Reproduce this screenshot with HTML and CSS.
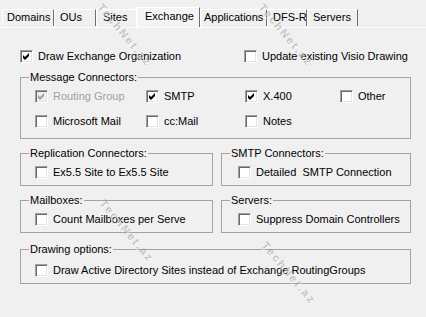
FILE: index.html
```html
<!DOCTYPE html>
<html>
<head>
<meta charset="utf-8">
<link rel="stylesheet" href="styles.css">
</head>
<body>
<div class="tabs">
  <div class="tab t-domains">Domains</div>
  <div class="tab t-ous">OUs</div>
  <div class="tab t-sites">Sites</div>
  <div class="tab t-exchange active">Exchange</div>
  <div class="tab t-apps">Applications</div>
  <div class="tab t-dfsr">DFS-R</div>
  <div class="tab t-servers">Servers</div>
</div>
<div class="page">
  <div class="toprow">
    <label class="cb"><span class="box"><svg viewBox="0 0 11 11"><polygon points="2,4 4,6 8,2 8,5 4,9 2,7"/></svg></span>Draw Exchange Organization</label>
    <label class="cb"><span class="box"></span>Update existing Visio Drawing</label>
  </div>

  <fieldset class="group msg">
    <legend>Message Connectors:</legend>
    <div class="grid4">
      <label class="cb disabled"><span class="box"><svg viewBox="0 0 11 11"><polygon points="2,4 4,6 8,2 8,5 4,9 2,7"/></svg></span>Routing Group</label>
      <label class="cb"><span class="box"><svg viewBox="0 0 11 11"><polygon points="2,4 4,6 8,2 8,5 4,9 2,7"/></svg></span>SMTP</label>
      <label class="cb"><span class="box"><svg viewBox="0 0 11 11"><polygon points="2,4 4,6 8,2 8,5 4,9 2,7"/></svg></span>X.400</label>
      <label class="cb"><span class="box"></span>Other</label>
      <label class="cb"><span class="box"></span>Microsoft Mail</label>
      <label class="cb"><span class="box"></span>cc:Mail</label>
      <label class="cb"><span class="box"></span>Notes</label>
    </div>
  </fieldset>

  <div class="pair">
    <fieldset class="group">
      <legend>Replication Connectors:</legend>
      <div class="inner left"><label class="cb"><span class="box"></span>Ex5.5 Site to Ex5.5 Site</label></div>
    </fieldset>
    <fieldset class="group">
      <legend>SMTP Connectors:</legend>
      <div class="inner right"><label class="cb"><span class="box"></span>Detailed&nbsp; SMTP Connection</label></div>
    </fieldset>
  </div>

  <div class="pair">
    <fieldset class="group">
      <legend>Mailboxes:</legend>
      <div class="inner left"><label class="cb"><span class="box"></span>Count Mailboxes per Serve</label></div>
    </fieldset>
    <fieldset class="group">
      <legend>Servers:</legend>
      <div class="inner right"><label class="cb"><span class="box"></span>Suppress Domain Controllers</label></div>
    </fieldset>
  </div>

  <fieldset class="group drawing">
    <legend>Drawing options:</legend>
    <div class="inner left tall"><label class="cb"><span class="box"></span>Draw Active Directory Sites instead of Exchange RoutingGroups</label></div>
  </fieldset>
</div>

<div class="wm wm1">TechNet.az</div>
<div class="wm wm2">TechNet.az</div>
<div class="wm wm3">TechNet.az</div>
<div class="wm wm4">TechNet.az</div>
</body>
</html>
```
FILE: styles.css
```css
* { box-sizing: border-box; }
html, body { margin: 0; background: #f0f0f0; }
body {
  font: 11px/13px "Liberation Sans", Arial, sans-serif;
  color: #000;
  width: 426px;
  height: 317px;
  overflow: hidden;
  position: relative;
}

/* tabs */
.tabs {
  display: flex;
  align-items: flex-end;
  height: 27px;
  padding-left: 2px;
}
.tab {
  height: 17px;
  margin-bottom: 1px;
  padding-top: 1px;
  border-left: 1px solid #fff;
  border-top: 1px solid #fff;
  border-right: 1px solid #6e6e6e;
  white-space: nowrap;
}
.t-domains { width: 52px; padding-left: 4px; }
.t-ous { width: 42px; padding-left: 5px; }
.t-sites { width: 40px; padding-left: 6px; border-right-color: transparent; }
.t-exchange { width: 64px; padding-left: 8px; }
.t-apps { width: 67px; padding-left: 3px; }
.t-dfsr { width: 40px; padding-left: 5px; }
.t-servers { width: 51px; padding-left: 5px; }
.tab.active {
  height: 20px;
  margin-bottom: 0;
  padding-top: 2px;
  background: #f4f4f4;
  position: relative;
  z-index: 1;
}

/* page */
.page {
  border-top: 1px solid #fbfbfb;
  padding: 0 15px 0 20px;
}
.toprow {
  margin-top: 22px;
  display: grid;
  grid-template-columns: 224px auto;
}

.cb {
  display: flex;
  align-items: center;
  gap: 5px;
  height: 13px;
  white-space: nowrap;
}
.box {
  flex: none;
  width: 13px;
  height: 13px;
  background: #fff;
  border: 1px solid;
  border-color: #a0a0a0 #ffffff #ffffff #a0a0a0;
  box-shadow: inset 1px 1px 0 #696969, inset -1px -1px 0 #e3e3e3;
}
.box svg { display: block; width: 11px; height: 11px; fill: #000; }
.cb.disabled { color: #a0a0a0; }
.cb.disabled .box { background: #f0f0f0; }
.cb.disabled .box svg { fill: #a0a0a0; }

/* group boxes */
.group {
  margin: 8px 0 0 0;
  padding: 0;
  min-width: 0;
  border: 1px solid #a3a3a3;
}
.group legend {
  margin-left: 8px;
  padding: 0 1px;
  line-height: 13px;
}
.grid4 {
  display: grid;
  grid-template-columns: 111px 99px 95px auto;
  row-gap: 12px;
  padding: 6px 0 10px 14px;
}
.pair {
  display: grid;
  grid-template-columns: 193px 190px;
  column-gap: 8px;
}
.inner { padding: 6px 0 6px 0; }
.inner.left { padding-left: 14px; }
.inner.right { padding-left: 16px; }
.drawing { margin-top: 10px; }
.inner.tall { padding-top: 8px; }

/* watermark overlay */
.wm {
  position: absolute;
  transform-origin: left top;
  transform: rotate(50deg);
  font: bold 11px/11px "Liberation Sans", Arial, sans-serif;
  letter-spacing: 2px;
  color: rgba(120, 120, 120, 0.4);
  text-shadow: 1px 1px 0 rgba(255, 255, 255, 0.6);
  white-space: nowrap;
  pointer-events: none;
}
.wm1 { left: 104px; top: 2px; }
.wm2 { left: 265px; top: 2px; }
.wm3 { left: 106px; top: 198px; }
.wm4 { left: 268px; top: 240px; }
```
